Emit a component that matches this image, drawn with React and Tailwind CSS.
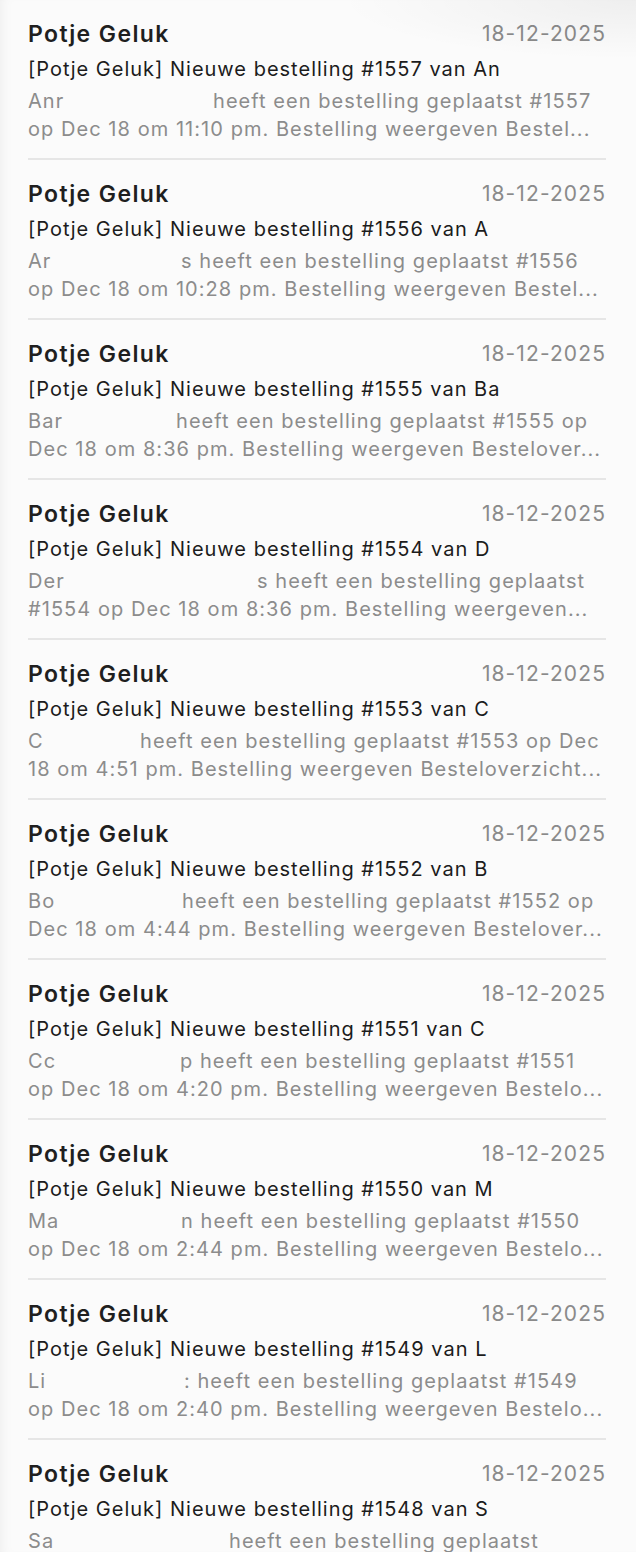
const mails = [
  { nr: 1557, subj: "An", head: "Anr", at: 213, line1: "heeft een bestelling geplaatst #1557", line2: "op Dec 18 om 11:10 pm. Bestelling weergeven Bestel..." },
  { nr: 1556, subj: "A", head: "Ar", at: 181, line1: "s heeft een bestelling geplaatst #1556", line2: "op Dec 18 om 10:28 pm. Bestelling weergeven Bestel..." },
  { nr: 1555, subj: "Ba", head: "Bar", at: 176, line1: "heeft een bestelling geplaatst #1555 op", line2: "Dec 18 om 8:36 pm. Bestelling weergeven Bestelover..." },
  { nr: 1554, subj: "D", head: "Der", at: 257, line1: "s heeft een bestelling geplaatst", line2: "#1554 op Dec 18 om 8:36 pm. Bestelling weergeven..." },
  { nr: 1553, subj: "C", head: "C", at: 140, line1: "heeft een bestelling geplaatst #1553 op Dec", line2: "18 om 4:51 pm. Bestelling weergeven Besteloverzicht..." },
  { nr: 1552, subj: "B", head: "Bo", at: 182, line1: "heeft een bestelling geplaatst #1552 op", line2: "Dec 18 om 4:44 pm. Bestelling weergeven Bestelover..." },
  { nr: 1551, subj: "C", head: "Cc", at: 180, line1: "p heeft een bestelling geplaatst #1551", line2: "op Dec 18 om 4:20 pm. Bestelling weergeven Bestelo..." },
  { nr: 1550, subj: "M", head: "Ma", at: 181, line1: "n heeft een bestelling geplaatst #1550", line2: "op Dec 18 om 2:44 pm. Bestelling weergeven Bestelo..." },
  { nr: 1549, subj: "L", head: "Li", at: 184, line1: ": heeft een bestelling geplaatst #1549", line2: "op Dec 18 om 2:40 pm. Bestelling weergeven Bestelo..." },
  { nr: 1548, subj: "S", head: "Sa", at: 229, line1: "heeft een bestelling geplaatst", line2: "" },
];

function MailRow({ mail }) {
  return (
    <div className="pl-[28px] pr-[30px]">
      <div className="pt-[19px] pb-[15px] border-b-2 border-[#e6e6e6]">
        <div className="flex items-center justify-between h-[30px]">
          <span className="text-[23px] font-semibold text-[#1f1f1f] tracking-[1.4px]">Potje Geluk</span>
          <span className="text-[21px] text-[#8a8a8a] tracking-[1.1px]">18-12-2025</span>
        </div>
        <div className="mt-[6px] h-[28px] leading-[28px] text-[20px] text-[#1c1c1c] tracking-[1px] whitespace-nowrap">
          [Potje Geluk] Nieuwe bestelling #{mail.nr} van {mail.subj}
        </div>
        <div className="mt-[4px] text-[20px] leading-[28px] text-[#8c8c8c] tracking-[1.05px]">
          <div className="flex whitespace-nowrap">
            <span className="shrink-0" style={{ width: mail.at - 28 }}>
              {mail.head}
            </span>
            <span>{mail.line1}</span>
          </div>
          <div className="whitespace-nowrap h-[28px]">{mail.line2}</div>
        </div>
      </div>
    </div>
  );
}

export default function App() {
  return (
    <div
      className="w-[636px] h-[1552px] overflow-hidden bg-[#fbfbfb] shadow-[inset_10px_0_14px_-10px_rgba(0,0,0,0.07)] relative"
      style={{ fontFamily: "Inter, 'Noto Sans', sans-serif" }}
    >
      <div className="absolute right-0 top-0 w-[300px] h-[60px] bg-[radial-gradient(ellipse_at_top_right,rgba(0,0,0,0.05),transparent_70%)] pointer-events-none" />
      {mails.map((m) => (
        <MailRow key={m.nr} mail={m} />
      ))}
    </div>
  );
}
